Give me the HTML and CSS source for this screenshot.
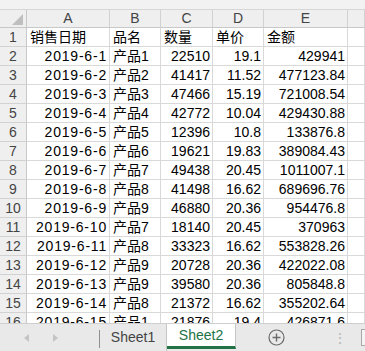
FILE: index.html
```html
<!DOCTYPE html>
<html lang="zh-CN">
<head>
    <meta charset="UTF-8">
    <meta name="viewport" content="width=device-width, initial-scale=1.0">
    <title>Sheet2</title>
    <link rel="stylesheet" href="styles.css">
</head>
<body>
    <!-- Formula bar edge -->
    <div class="top-strip"></div>

    <!-- Worksheet -->
    <div class="sheet">
        <div class="grid" id="grid">
            <div class="corner">
                <svg width="11" height="11" viewBox="0 0 11 11"><polygon points="11,0 11,11 0,11" fill="#bfbfbf"/></svg>
            </div>
            <div class="col-head">A</div>
            <div class="col-head">B</div>
            <div class="col-head">C</div>
            <div class="col-head">D</div>
            <div class="col-head">E</div>
            <div class="col-head"></div>
        </div>
    </div>

    <!-- Sheet tabs -->
    <div class="tab-bar">
        <div class="nav">
            <svg width="8" height="10" viewBox="0 0 8 10"><polygon points="6,1 6,9 1,5" fill="#c4c4c4"/></svg>
            <svg width="8" height="10" viewBox="0 0 8 10"><polygon points="2,1 2,9 7,5" fill="#c4c4c4"/></svg>
        </div>
        <div class="tab">Sheet1</div>
        <div class="tab active">Sheet2</div>
        <div class="add-sheet">
            <svg width="17" height="17" viewBox="0 0 17 17">
                <circle cx="8.5" cy="8.5" r="7.5" fill="none" stroke="#6b6b6b" stroke-width="1.2"/>
                <path d="M8.5 4.5v8M4.5 8.5h8" stroke="#6b6b6b" stroke-width="1.4"/>
            </svg>
        </div>
        <div class="dots">⋮</div>
        <div class="scroll-box"></div>
    </div>

    <script>
        // Sheet data: date, product, qty, price, amount
        const rows = [
            ['销售日期', '品名', '数量', '单价', '金额'],
            ['2019-6-1', '产品1', '22510', '19.1', '429941'],
            ['2019-6-2', '产品2', '41417', '11.52', '477123.84'],
            ['2019-6-3', '产品3', '47466', '15.19', '721008.54'],
            ['2019-6-4', '产品4', '42772', '10.04', '429430.88'],
            ['2019-6-5', '产品5', '12396', '10.8', '133876.8'],
            ['2019-6-6', '产品6', '19621', '19.83', '389084.43'],
            ['2019-6-7', '产品7', '49438', '20.45', '1011007.1'],
            ['2019-6-8', '产品8', '41498', '16.62', '689696.76'],
            ['2019-6-9', '产品9', '46880', '20.36', '954476.8'],
            ['2019-6-10', '产品7', '18140', '20.45', '370963'],
            ['2019-6-11', '产品8', '33323', '16.62', '553828.26'],
            ['2019-6-12', '产品9', '20728', '20.36', '422022.08'],
            ['2019-6-13', '产品9', '39580', '20.36', '805848.8'],
            ['2019-6-14', '产品8', '21372', '16.62', '355202.64'],
            ['2019-6-15', '产品1', '21876', '19.4', '426871.6']
        ];

        const grid = document.getElementById('grid');

        rows.forEach((row, i) => {
            const num = document.createElement('div');
            num.className = 'row-head';
            num.textContent = i + 1;
            grid.appendChild(num);

            row.forEach((value, j) => {
                const cell = document.createElement('div');
                cell.className = 'cell';
                if (i > 0 && j !== 1) {
                    cell.classList.add(j === 0 ? 'date' : 'num');
                }
                cell.textContent = value;
                grid.appendChild(cell);
            });

            // empty column F
            const blank = document.createElement('div');
            blank.className = 'cell';
            grid.appendChild(blank);
        });
    </script>
</body>
</html>
```

FILE: styles.css
```css
* {
    margin: 0;
    padding: 0;
    box-sizing: border-box;
}

body {
    width: 365px;
    height: 351px;
    overflow: hidden;
    background-color: #ffffff;
    color: #000000;
    font-family: "Liberation Sans", "Noto Sans CJK SC", sans-serif;
    font-size: 14px;
}

.top-strip {
    height: 10px;
    background-color: #f2f2f2;
    border-bottom: 1px solid #d6d6d6;
}

/* Worksheet */
.sheet {
    height: 313px;
    overflow: hidden;
}

.grid {
    display: grid;
    grid-template-columns: 27px 83px 51px 52px 51px 84px 1fr;
    grid-auto-rows: 19px;
    margin-top: -1px;
}

.grid > div {
    border-right: 1px solid #d9d9d9;
    border-bottom: 1px solid #d9d9d9;
    line-height: 18px;
    white-space: nowrap;
    overflow: hidden;
}

.corner {
    background-color: #efefef;
    display: flex;
    align-items: flex-end;
    justify-content: flex-end;
    padding: 0 3px 2px 0;
    border-right-color: #c8c8c8 !important;
    border-bottom-color: #c8c8c8 !important;
}

.col-head {
    background-color: #efefef;
    color: #444444;
    text-align: center;
    border-bottom-color: #c8c8c8 !important;
    border-right-color: #d2d2d2 !important;
}

.row-head {
    background-color: #efefef;
    color: #444444;
    text-align: center;
    border-right-color: #c8c8c8 !important;
    border-bottom-color: #d2d2d2 !important;
}

.cell {
    padding: 0 2px 0 3px;
}

.cell.num {
    text-align: right;
}

.cell.date {
    text-align: right;
    letter-spacing: 0.8px;
    padding-right: 2px;
}

/* Sheet tabs */
.tab-bar {
    height: 28px;
    background-color: #e9e9e9;
    border-top: 1px solid #cfcfcf;
    display: flex;
    align-items: stretch;
}

.nav {
    width: 100px;
    display: flex;
    align-items: center;
    gap: 20px;
    padding-left: 23px;
    position: relative;
}

.nav::after {
    content: "";
    position: absolute;
    right: 0;
    top: 6px;
    bottom: 3px;
    border-right: 1px solid #8f8f8f;
}

.tab {
    width: 67px;
    display: flex;
    align-items: center;
    justify-content: center;
    color: #444444;
    font-size: 14px;
    border-right: 1px solid #c6c6c6;
    padding-bottom: 2px;
}

.tab.active {
    width: 69px;
    background-color: #ffffff;
    color: #217346;
    border-bottom: 3px solid #217346;
    padding-bottom: 0;
    margin-bottom: 2px;
}

.add-sheet {
    width: 83px;
    display: flex;
    align-items: center;
    justify-content: center;
    padding-right: 2px;
}

.dots {
    flex: 1;
    display: flex;
    align-items: center;
    justify-content: flex-end;
    padding-right: 14px;
    color: #b8b8b8;
    font-size: 14px;
}

.scroll-box {
    width: 4px;
    margin: 5px 0 5px 0;
    border: 1px solid #a8a8a8;
    border-right: none;
    background-color: #f4f4f4;
}
```
